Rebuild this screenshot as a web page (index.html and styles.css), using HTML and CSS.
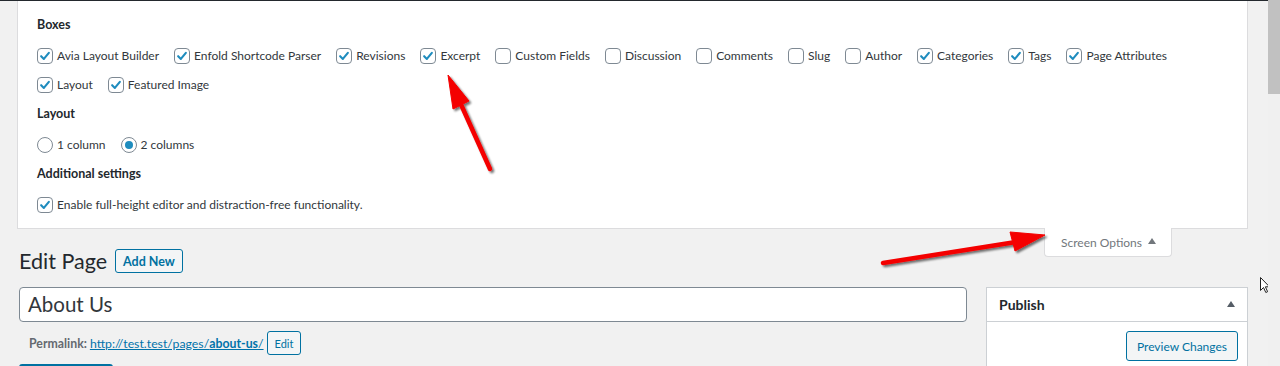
FILE: index.html
```html
<!DOCTYPE html>
<html>
<head>
<meta charset="utf-8">
<link rel="stylesheet" href="styles.css">
</head>
<body>
<div class="screen">
  <div class="main">
    <div class="adminbar-edge"></div>
    <div class="content">
      <div class="options-panel">
        <div class="opt-heading">Boxes</div>
        <div class="opt-row">
          <label class="opt"><span class="cb on"><svg viewBox="0 0 16 16"><path d="M3.6 8.2 L6.7 11.3 L12.4 4.4"/></svg></span>Avia Layout Builder</label>
          <label class="opt"><span class="cb on"><svg viewBox="0 0 16 16"><path d="M3.6 8.2 L6.7 11.3 L12.4 4.4"/></svg></span>Enfold Shortcode Parser</label>
          <label class="opt"><span class="cb on"><svg viewBox="0 0 16 16"><path d="M3.6 8.2 L6.7 11.3 L12.4 4.4"/></svg></span>Revisions</label>
          <label class="opt"><span class="cb on"><svg viewBox="0 0 16 16"><path d="M3.6 8.2 L6.7 11.3 L12.4 4.4"/></svg></span>Excerpt</label>
          <label class="opt"><span class="cb"></span>Custom Fields</label>
          <label class="opt"><span class="cb"></span>Discussion</label>
          <label class="opt"><span class="cb"></span>Comments</label>
          <label class="opt"><span class="cb"></span>Slug</label>
          <label class="opt"><span class="cb"></span>Author</label>
          <label class="opt"><span class="cb on"><svg viewBox="0 0 16 16"><path d="M3.6 8.2 L6.7 11.3 L12.4 4.4"/></svg></span>Categories</label>
          <label class="opt"><span class="cb on"><svg viewBox="0 0 16 16"><path d="M3.6 8.2 L6.7 11.3 L12.4 4.4"/></svg></span>Tags</label>
          <label class="opt"><span class="cb on"><svg viewBox="0 0 16 16"><path d="M3.6 8.2 L6.7 11.3 L12.4 4.4"/></svg></span>Page Attributes</label>
        </div>
        <div class="opt-row">
          <label class="opt"><span class="cb on"><svg viewBox="0 0 16 16"><path d="M3.6 8.2 L6.7 11.3 L12.4 4.4"/></svg></span>Layout</label>
          <label class="opt"><span class="cb on"><svg viewBox="0 0 16 16"><path d="M3.6 8.2 L6.7 11.3 L12.4 4.4"/></svg></span>Featured Image</label>
        </div>
        <div class="opt-heading sec">Layout</div>
        <div class="opt-row">
          <label class="opt"><span class="rd"></span>1 column</label>
          <label class="opt"><span class="rd on"></span>2 columns</label>
        </div>
        <div class="opt-heading sec">Additional settings</div>
        <div class="opt-row">
          <label class="opt"><span class="cb on"><svg viewBox="0 0 16 16"><path d="M3.6 8.2 L6.7 11.3 L12.4 4.4"/></svg></span>Enable full-height editor and distraction-free functionality.</label>
        </div>
      </div>

      <div class="head-row">
        <div class="title-group">
          <h1 class="page-title">Edit Page</h1>
          <span class="btn add-new">Add New</span>
        </div>
        <div class="so-tab">Screen Options <span class="tri"></span></div>
      </div>

      <div class="post-body">
        <div class="post-main">
          <div class="title-input">About Us</div>
          <div class="permalink">
            <strong>Permalink:</strong>
            <a class="plink" href="#">http://test.test/pages/<b>about-us</b>/</a>
            <span class="btn small">Edit</span>
          </div>
          <div class="blue-btn"></div>
        </div>
        <div class="side">
          <div class="publish">
            <div class="pub-head"><span>Publish</span><span class="tri dark"></span></div>
            <div class="pub-body"><span class="btn preview">Preview Changes</span></div>
          </div>
        </div>
      </div>
    </div>

    <svg class="arrows" width="1268" height="366" viewBox="0 0 1268 366">
      <defs>
        <filter id="sh" x="-20%" y="-20%" width="140%" height="140%">
          <feGaussianBlur in="SourceAlpha" stdDeviation="1.2"/>
          <feOffset dx="1.5" dy="2" result="b"/>
          <feComponentTransfer><feFuncA type="linear" slope="0.55"/></feComponentTransfer>
          <feMerge><feMergeNode/><feMergeNode in="SourceGraphic"/></feMerge>
        </filter>
      </defs>
      <g filter="url(#sh)" fill="#f40000" stroke="#f40000">
        <line x1="490" y1="169" x2="459" y2="100" stroke-width="4.5" stroke-linecap="round"/>
        <polygon points="448,75 453,109 469,101" stroke-width="1" stroke-linejoin="round"/>
        <line x1="883" y1="263" x2="1016" y2="242" stroke-width="4.5" stroke-linecap="round"/>
        <polygon points="1045,235 1010,232 1015,251" stroke-width="1" stroke-linejoin="round"/>
      </g>
      <path class="cursor" d="M1260.5 277.5 L1260.5 290.5 L1263.5 287.5 L1265.8 292.5 L1267.6 291.7 L1265.4 286.8 L1269.5 286.8 Z"/>
    </svg>
  </div>
  <div class="scrollbar"><div class="thumb"></div></div>
</div>
</body>
</html>
```

FILE: styles.css
```css
* { box-sizing: border-box; }
html, body { margin: 0; padding: 0; }
body {
  font-family: Lato, "Open Sans", sans-serif;
  font-size: 12.5px;
  color: #32373c;
  background: #f1f1f1;
  overflow: hidden;
}
.screen { display: flex; width: 1280px; height: 366px; overflow: hidden; }
.main { position: relative; width: 1268px; height: 366px; background: #f1f1f1; }
.adminbar-edge { height: 1px; background: #23282d; }
.content { padding: 0 20px 0 17px; }

.scrollbar { width: 12px; height: 366px; background: #f0f0f0; }
.thumb { height: 94px; background: #c1c1c1; }

/* Screen options panel */
.options-panel {
  background: #fff;
  border: 1px solid #dcdcde;
  border-top: 0;
  padding: 14px 20px 9px 19px;
}
.opt-heading {
  font-weight: 700;
  font-size: 12.5px;
  color: #23282d;
  line-height: 20px;
  height: 20px;
}
.opt-heading.sec { margin-top: 5px; }
.opt-heading + .opt-row { margin-top: 6px; }
.opt-row {
  display: flex;
  column-gap: 15px;
  height: 29px;
  align-items: center;
}
.opt {
  display: flex;
  align-items: center;
  gap: 4px;
  font-size: 12px;
  color: #32373c;
  white-space: nowrap;
}
.cb {
  width: 16px; height: 16px;
  border: 1px solid #7e8993;
  border-radius: 4px;
  background: #fff;
  display: inline-flex;
  align-items: center;
  justify-content: center;
  flex: none;
}
.cb svg { width: 14px; height: 14px; }
.cb svg path { fill: none; stroke: #1e8cbe; stroke-width: 2.4; stroke-linecap: round; stroke-linejoin: round; }
.rd {
  width: 16px; height: 16px;
  border: 1px solid #7e8993;
  border-radius: 50%;
  background: #fff;
  display: inline-flex;
  align-items: center;
  justify-content: center;
  flex: none;
}
.rd.on::after {
  content: "";
  width: 8px; height: 8px;
  border-radius: 50%;
  background: #1e8cbe;
}

/* Heading row */
.head-row {
  display: flex;
  justify-content: space-between;
  align-items: flex-start;
}
.title-group {
  display: flex;
  align-items: center;
  margin-top: 17px;
  margin-left: 2px;
  height: 30px;
}
.page-title {
  margin: 0;
  font-size: 21.5px;
  font-weight: 400;
  line-height: 30px;
  color: #23282d;
}
.btn {
  display: inline-flex;
  align-items: center;
  border: 1px solid #0071a1;
  border-radius: 3px;
  background: #f3f5f6;
  color: #0071a1;
  white-space: nowrap;
}
.add-new {
  margin-left: 8px;
  height: 24px;
  padding: 0 7px;
  font-weight: 700;
}
.so-tab {
  margin-top: -1px;
  margin-right: 76px;
  height: 29px;
  background: #fff;
  border: 1px solid #dcdcde;
  border-top: 0;
  border-radius: 0 0 4px 4px;
  padding: 0 15px 0 16px;
  display: flex;
  align-items: center;
  gap: 6px;
  font-size: 12px;
  color: #72777c;
}
.tri {
  width: 0; height: 0;
  border-left: 4px solid transparent;
  border-right: 4px solid transparent;
  border-bottom: 6px solid #72777c;
  margin-top: -2px;
}
.tri.dark { border-bottom-color: #555d66; }

/* Post body */
.post-body {
  display: flex;
  gap: 19px;
  margin-top: 11px;
  padding-left: 2px;
}
.post-main { flex: 1; }
.title-input {
  height: 35px;
  border: 1px solid #7e8993;
  border-radius: 4px;
  background: #fff;
  font-size: 20.5px;
  line-height: 33px;
  padding: 0 8px;
  color: #32373c;
}
.permalink {
  display: flex;
  align-items: center;
  height: 24px;
  margin-top: 9px;
  padding-left: 10px;
  color: #646970;
  font-size: 12.3px;
}
.permalink strong { font-weight: 700; margin-right: 3px; }
.plink { color: #0073aa; text-decoration: underline; }
.plink b { font-weight: 700; }
.btn.small {
  margin-left: 3px;
  height: 24px;
  padding: 0 7px;
  font-size: 11px;
}
.blue-btn {
  margin-top: 9px;
  width: 94px;
  height: 30px;
  background: #0071a1;
  border-radius: 3px 3px 0 0;
}
.side { width: 262px; flex: none; }
.publish {
  background: #fff;
  border: 1px solid #ccd0d4;
  height: 100px;
}
.pub-head {
  height: 34px;
  border-bottom: 1px solid #ccd0d4;
  display: flex;
  align-items: center;
  justify-content: space-between;
  padding: 0 12px 0 12px;
  font-size: 14px;
  font-weight: 700;
  color: #23282d;
}
.pub-body {
  display: flex;
  justify-content: flex-end;
  padding: 9px 9px 0 0;
}
.btn.preview {
  height: 30px;
  padding: 0 10px;
  font-size: 12px;
}

/* overlay */
.arrows { position: absolute; left: 0; top: 0; pointer-events: none; }
.cursor { fill: #fff; stroke: #222; stroke-width: 1; stroke-linejoin: round; }
```
